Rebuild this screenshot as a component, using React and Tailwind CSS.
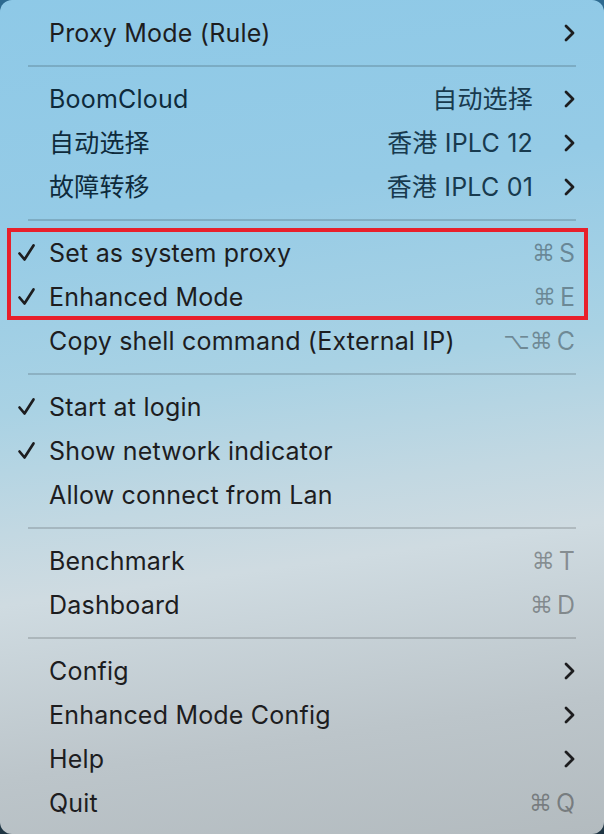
import React from 'react';

const Check = () => (
  <svg width="20" height="20" viewBox="0 0 20 20" fill="none" className="shrink-0">
    <path d="M2.5 10.5 L7.5 16.5 L16.5 2.5" stroke="#1d1d1f" strokeWidth="2.7" strokeLinecap="round" strokeLinejoin="round" />
  </svg>
);

const Chevron = () => (
  <svg width="12" height="18" viewBox="0 0 12 18" fill="none" className="shrink-0">
    <path d="M3 2 L10 9 L3 16" stroke="#1d1d1f" strokeWidth="2.8" strokeLinecap="round" strokeLinejoin="round" />
  </svg>
);

const Shortcut = ({ keys }) => (
  <span className="flex items-center gap-[4px] text-black/35">
    {keys.map((k, i) =>
      k.length === 1 && /[A-Z]/.test(k) ? (
        <span key={i} className="text-[25px] leading-none">{k}</span>
      ) : (
        <span key={i} className="text-[23px] leading-none font-['DejaVu_Sans',sans-serif]">{k}</span>
      )
    )}
  </span>
);

const Item = ({ checked, label, value, shortcut, submenu, navy }) => (
  <div className="flex items-center h-[44px] pl-[17px] pr-[29px]">
    <div className="w-[32px] shrink-0 flex items-center">{checked && <Check />}</div>
    <span className={`flex-1 text-[25px] tracking-[0.2px] leading-none ${navy ? 'text-[#0e2a3b]' : 'text-[#1d1d1f]'}`}>
      {label}
    </span>
    {value && <span className="text-[25px] tracking-[0.2px] leading-none text-[#183a4e] mr-[30px]">{value}</span>}
    {shortcut && <Shortcut keys={shortcut} />}
    {submenu && <Chevron />}
  </div>
);

const Separator = () => (
  <div className="h-[22px] flex items-center px-[28px]">
    <div className="h-[2px] w-full bg-black/15" />
  </div>
);

export default function App() {
  return (
    <div className="w-[604px] h-[834px] bg-[linear-gradient(180deg,#2d6a90_0%,#3d6f88_50%,#1e3442_100%)] font-['Inter','Noto_Sans_CJK_SC',sans-serif]">
      <div className="w-full h-full rounded-[12px] overflow-hidden pt-[11px] bg-[linear-gradient(172deg,#8ec9e7_0%,#95cbe6_25%,#a9d2e4_45%,#c2d8e2_58%,#cfdbe1_66%,#bcc5ca_85%,#b3bbbf_100%)]">
        <Item label="Proxy Mode (Rule)" submenu />
        <Separator />
        <Item label="BoomCloud" value="自动选择" submenu navy />
        <Item label="自动选择" value="香港 IPLC 12" submenu navy />
        <Item label="故障转移" value="香港 IPLC 01" submenu navy />
        <Separator />
        <div className="relative">
          <Item checked label="Set as system proxy" shortcut={['⌘', 'S']} />
          <Item checked label="Enhanced Mode" shortcut={['⌘', 'E']} />
          <div className="absolute left-[7px] right-[16px] top-[-3px] bottom-[-1px] border-[4px] border-[#e8202b] pointer-events-none" />
        </div>
        <Item label="Copy shell command (External IP)" shortcut={['⌥⌘', 'C']} />
        <Separator />
        <Item checked label="Start at login" />
        <Item checked label="Show network indicator" />
        <Item label="Allow connect from Lan" />
        <Separator />
        <Item label="Benchmark" shortcut={['⌘', 'T']} />
        <Item label="Dashboard" shortcut={['⌘', 'D']} />
        <Separator />
        <Item label="Config" submenu />
        <Item label="Enhanced Mode Config" submenu />
        <Item label="Help" submenu />
        <Item label="Quit" shortcut={['⌘', 'Q']} />
      </div>
    </div>
  );
}
